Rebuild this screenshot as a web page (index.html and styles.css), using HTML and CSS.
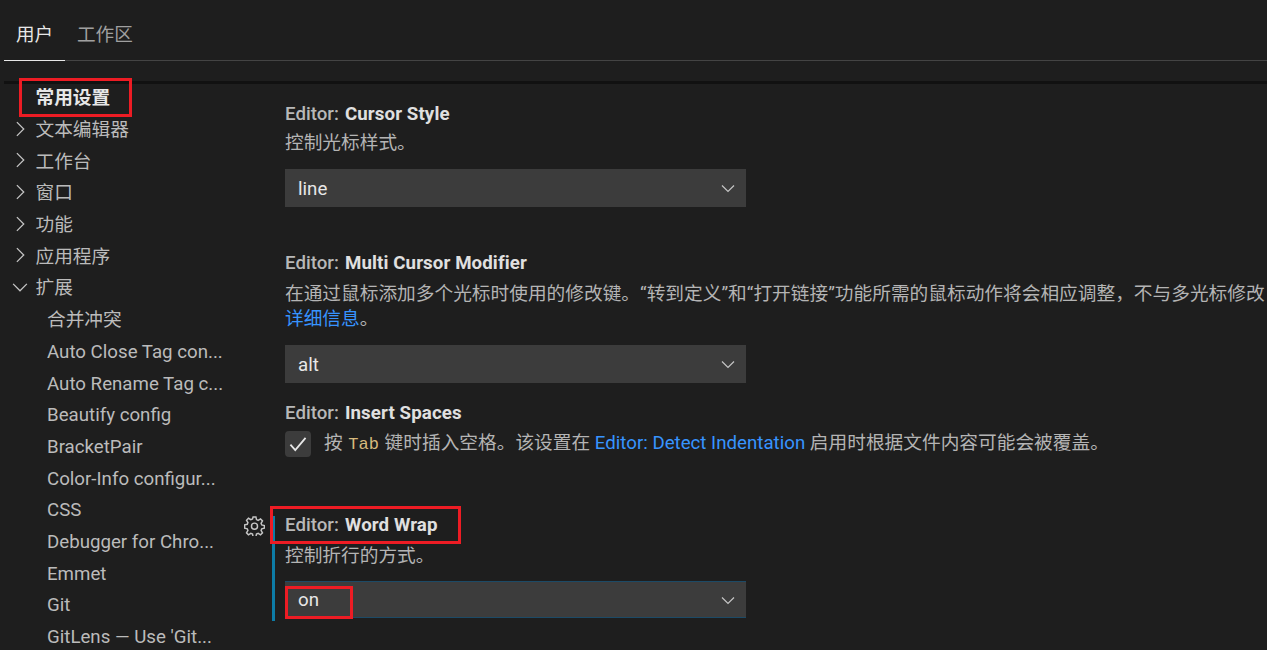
FILE: index.html
```html
<!DOCTYPE html>
<html lang="zh-CN">
<head>
    <meta charset="UTF-8">
    <meta name="viewport" content="width=device-width, initial-scale=1.0">
    <title>设置</title>
    <link rel="stylesheet" href="styles.css">
</head>
<body>
    <header class="tabs">
        <div class="tab active">用户</div>
        <div class="tab">工作区</div>
    </header>
    <div class="divider"></div>
    <div class="content">
        <nav class="toc">
            <div class="row top">常用设置</div>
            <div class="row"><svg class="twist" viewBox="0 0 16 16"><path d="M5.500 2.500 11 8l-5.500 5.500"/></svg>文本编辑器</div>
            <div class="row"><svg class="twist" viewBox="0 0 16 16"><path d="M5.500 2.500 11 8l-5.500 5.500"/></svg>工作台</div>
            <div class="row"><svg class="twist" viewBox="0 0 16 16"><path d="M5.500 2.500 11 8l-5.500 5.500"/></svg>窗口</div>
            <div class="row"><svg class="twist" viewBox="0 0 16 16"><path d="M5.500 2.500 11 8l-5.500 5.500"/></svg>功能</div>
            <div class="row"><svg class="twist" viewBox="0 0 16 16"><path d="M5.500 2.500 11 8l-5.500 5.500"/></svg>应用程序</div>
            <div class="row"><svg class="twist" viewBox="0 0 16 16"><path d="M2.500 5.500 8 11l5.500-5.500"/></svg>扩展</div>
            <div class="row sub">合并冲突</div>
            <div class="row sub">Auto Close Tag con...</div>
            <div class="row sub">Auto Rename Tag c...</div>
            <div class="row sub">Beautify config</div>
            <div class="row sub">BracketPair</div>
            <div class="row sub">Color-Info configur...</div>
            <div class="row sub">CSS</div>
            <div class="row sub">Debugger for Chro...</div>
            <div class="row sub">Emmet</div>
            <div class="row sub">Git</div>
            <div class="row sub">GitLens — Use 'Git...</div>
        </nav>
        <main class="settings">
            <section class="item cursor-style">
                <div class="title">Editor: <b>Cursor Style</b></div>
                <div class="desc">控制光标样式。</div>
                <div class="select">line<svg class="chev" viewBox="0 0 16 16"><path d="M2 5.500 8 11.500l6-6"/></svg></div>
            </section>
            <section class="item multi-cursor">
                <div class="title">Editor: <b>Multi Cursor Modifier</b></div>
                <div class="desc">在通过鼠标添加多个光标时使用的修改键。“转到定义”和“打开链接”功能所需的鼠标动作将会相应调整，不与多光标修改</div>
                <div class="desc more"><a>详细信息</a>。</div>
                <div class="select">alt<svg class="chev" viewBox="0 0 16 16"><path d="M2 5.500 8 11.500l6-6"/></svg></div>
            </section>
            <section class="item insert-spaces">
                <div class="title">Editor: <b>Insert Spaces</b></div>
                <div class="check-row">
                    <span class="checkbox"><svg viewBox="0 0 16 16"><path d="M2.500 8.500 6 12.500 13.500 3.500"/></svg></span>
                    <span class="desc">按 <code>Tab</code> 键时插入空格。该设置在 <a>Editor: Detect Indentation</a> 启用时根据文件内容可能会被覆盖。</span>
                </div>
            </section>
            <section class="item word-wrap">
                <svg class="gear" viewBox="0 0 16 16">
                    <path d="M6.900 1.500h2.200l.4 2 1.300.6 1.800-1.100 1.500 1.500-1.100 1.800.5 1.300 2 .4v2.100l-2 .5-.5 1.200 1.100 1.800-1.500 1.500-1.800-1.100-1.300.5-.4 2H6.900l-.4-2-1.300-.5-1.800 1.100-1.500-1.500 1.100-1.800-.5-1.200-2-.5V7.500l2-.4.500-1.300L1.900 4l1.500-1.500 1.800 1.100 1.300-.6z"/>
                    <circle cx="8" cy="8.500" r="2.300"/>
                </svg>
                <div class="title">Editor: <b>Word Wrap</b></div>
                <div class="desc">控制折行的方式。</div>
                <div class="select focused">on<svg class="chev" viewBox="0 0 16 16"><path d="M2 5.500 8 11.500l6-6"/></svg></div>
            </section>
        </main>
    </div>
    <div class="mark mark-toc"></div>
    <div class="mark mark-title"></div>
    <div class="mark mark-value"></div>
</body>
</html>
```

FILE: styles.css
```css
* {
    box-sizing: border-box;
    margin: 0;
    padding: 0;
}

html, body {
    height: 650px;
    overflow: hidden;
}

body {
    position: relative;
    background-color: #1e1e1e;
    color: #cccccc;
    font-family: Roboto, "Noto Sans CJK SC", sans-serif;
    font-size: 18.7px;
}

.tabs {
    display: flex;
    height: 61px;
    margin-left: 4px;
    border-bottom: 1px solid #444444;
}

.tab {
    height: 61px;
    padding: 19px 12px 0;
    font-size: 18.6px;
    line-height: 32px;
    color: #a0a0a0;
    white-space: nowrap;
}

.tab.active {
    width: 61px;
    color: #e7e7e7;
    border-bottom: 1px solid #e7e7e7;
}

.divider {
    height: 3px;
    margin: 20px 0 0 4px;
    background-color: #111111;
}

.content {
    display: flex;
    height: 566px;
}

.toc {
    width: 272px;
    flex-shrink: 0;
}

.row {
    position: relative;
    display: flex;
    align-items: center;
    height: 31.7px;
    padding-top: 3px;
    padding-left: 35.5px;
    line-height: 28px;
    color: #bbbbbb;
    white-space: nowrap;
}

.row.top {
    margin-top: -3px;
    color: #e7e7e7;
    font-weight: 700;
}

.row.sub {
    padding-left: 47px;
}

.twist {
    position: absolute;
    left: 10px;
    top: 6px;
    width: 20px;
    height: 20px;
    fill: none;
    stroke: #c5c5c5;
    stroke-width: 1;
}

.settings {
    flex: 1;
    min-width: 0;
}

.item {
    position: relative;
    padding-left: 13px;
}

.cursor-style {
    height: 150px;
    padding-top: 13px;
}

.multi-cursor {
    height: 150px;
    padding-top: 12px;
}

.multi-cursor .title {
    margin-bottom: 1px;
}

.insert-spaces {
    height: 132px;
    padding-top: 12px;
}

.word-wrap {
    height: 105px;
    padding-left: 10px;
    border-left: 3px solid #0d7ca6;
}

.word-wrap .title {
    height: 25px;
    line-height: 19px;
}

.word-wrap .desc {
    line-height: 31px;
}

.title {
    height: 31.7px;
    line-height: 35px;
    color: #b8b8b8;
    font-weight: 500;
    white-space: nowrap;
}

.title b {
    margin-left: 1.5px;
    color: #e0e0e0;
    font-weight: 700;
    letter-spacing: 0.1px;
}

.desc {
    height: 29px;
    line-height: 29px;
    color: #b4b4b4;
    white-space: nowrap;
}

.multi-cursor .desc {
    line-height: 30px;
}

a {
    color: #3794ff;
}

.multi-cursor .more {
    height: 26px;
    line-height: 23px;
}

.select {
    position: relative;
    width: 461px;
    height: 38px;
    margin-top: 11px;
    padding-left: 13px;
    line-height: 40px;
    background-color: #3c3c3c;
    color: #e7e7e7;
}

.select.focused {
    height: 37px;
    border-top: 1px solid #1c4a66;
    border-bottom: 1px solid #1c4a66;
    line-height: 37px;
}

.chev {
    position: absolute;
    right: 10px;
    top: 11px;
    width: 16px;
    height: 16px;
    fill: none;
    stroke: #c5c5c5;
    stroke-width: 1.2;
}

.focused .chev {
    top: 10px;
}

.check-row {
    display: flex;
    align-items: center;
    gap: 13px;
    margin-top: 3.3px;
}

.check-row .desc {
    margin-top: -2px;
}

.checkbox {
    display: flex;
    width: 26px;
    height: 26px;
    padding: 2px;
    flex-shrink: 0;
    background-color: #3c3c3c;
    border-radius: 4px;
}

.checkbox svg {
    fill: none;
    stroke: #e7e7e7;
    stroke-width: 1.3;
}

code {
    margin: 0 1px;
    font-family: "Liberation Mono", monospace;
    font-size: 17px;
    color: #d7ba7d;
}

.gear {
    position: absolute;
    left: -31px;
    top: -1px;
    width: 21px;
    height: 21px;
    fill: none;
    stroke: #c5c5c5;
    stroke-width: 1.1;
}

/* red boxes drawn over the screenshot */
.mark {
    position: absolute;
    border: 3px solid #ed1c24;
}

.mark-toc {
    left: 19px;
    top: 78px;
    width: 113px;
    height: 39px;
}

.mark-title {
    left: 270px;
    top: 506px;
    width: 191px;
    height: 38px;
}

.mark-value {
    left: 285px;
    top: 586px;
    width: 68px;
    height: 33px;
}
```
